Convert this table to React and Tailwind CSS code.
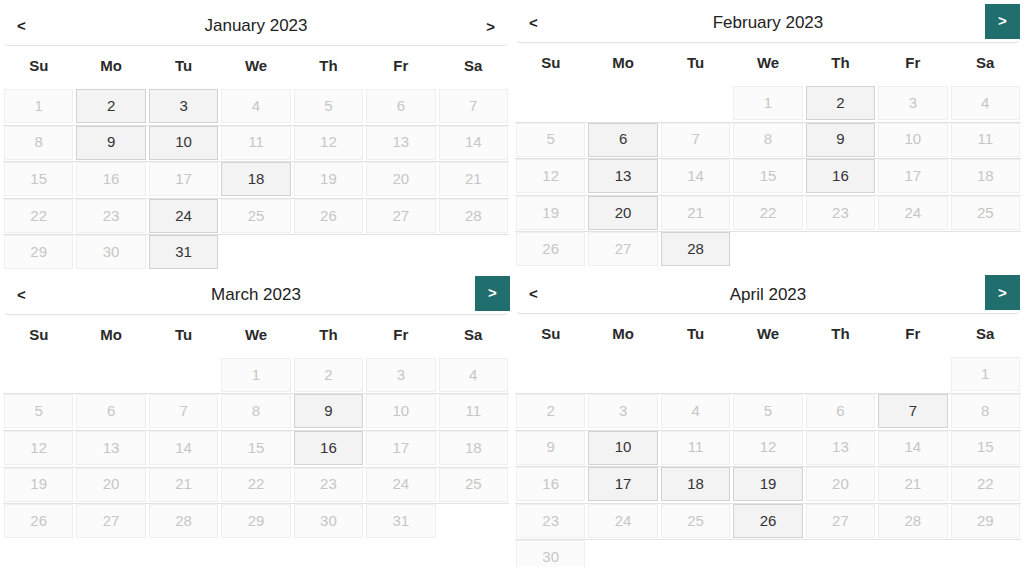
import React from "react";

const DAYS = ["Su", "Mo", "Tu", "We", "Th", "Fr", "Sa"];

function buildWeeks(start, count) {
  const cells = [];
  for (let i = 0; i < start; i++) cells.push(null);
  for (let d = 1; d <= count; d++) cells.push(d);
  const weeks = [];
  for (let i = 0; i < cells.length; i += 7) weeks.push(cells.slice(i, i + 7));
  return weeks;
}

function Calendar({ title, start, count, highlighted, className, teal, btnClass }) {
  const weeks = buildWeeks(start, count);
  return (
    <div className={className}>
      <div className="relative flex h-[38px] items-center justify-center rounded-md bg-white shadow-[0_2px_1px_-1px_rgba(0,0,0,0.13)]">
        <span className="absolute left-[14px] top-[11px] text-[15px] font-bold leading-none text-[#222]">&lt;</span>
        <span className="mb-[0px] text-[17px] font-medium text-[#222]">{title}</span>
        {teal ? (
          <span className={btnClass + " absolute top-0 flex h-[35px] w-[35px] items-center justify-center bg-[#206e6d] text-[15px] font-bold text-white"}>&gt;</span>
        ) : (
          <span className="absolute right-[14px] top-[12px] text-[15px] font-bold leading-none text-[#222]">&gt;</span>
        )}
      </div>
      <div className="grid h-[44px] grid-cols-7 items-center gap-[3px] px-px pb-[2px]">
        {DAYS.map((d) => (
          <div key={d} className="text-center text-[15px] font-semibold text-[#2a2a2a]">
            {d}
          </div>
        ))}
      </div>
      <div className="flex flex-col">
        {weeks.map((w, wi) => (
          <div
            key={wi}
            className={
              wi < weeks.length - 1
                ? "grid grid-cols-7 gap-[3px] border-b border-[#e2e2e2] px-px pb-[1.6px]"
                : "grid grid-cols-7 gap-[3px] px-px"
            }
          >
            {Array.from({ length: 7 }).map((_, ci) => {
              const d = w[ci];
              if (d == null) return <div key={ci} className="h-[34px]" />;
              const on = highlighted.includes(d);
              return (
                <div
                  key={ci}
                  className={
                    on
                      ? "flex h-[34px] items-center justify-center border border-[#d2d2d2] bg-[#f3f3f3] text-[15px] text-[#333]"
                      : "flex h-[34px] items-center justify-center border border-[#efefef] bg-[#fbfbfb] text-[15px] text-[#c6c6c6]"
                  }
                >
                  {d}
                </div>
              );
            })}
          </div>
        ))}
      </div>
    </div>
  );
}

export default function App() {
  return (
    <div
      className="flex h-[567px] w-[1024px] gap-[6px] overflow-hidden bg-white pl-[3px]"
      style={{ fontFamily: '"Liberation Sans", Arial, sans-serif' }}
    >
      <div className="flex w-[506px] flex-col pt-[7px]">
        <Calendar
          title="January 2023"
          start={0}
          count={31}
          highlighted={[2, 3, 9, 10, 18, 24, 31]}
        />
        <Calendar
          className="mt-[6.5px]"
          title="March 2023"
          start={3}
          count={31}
          highlighted={[9, 16]}
          teal
          btnClass="right-[-1px]"
        />
      </div>
      <div className="flex w-[506px] flex-col pt-[4px]">
        <Calendar
          title="February 2023"
          start={3}
          count={28}
          highlighted={[2, 6, 9, 13, 16, 20, 28]}
          teal
          btnClass="right-px"
        />
        <Calendar
          className="mt-[9px]"
          title="April 2023"
          start={6}
          count={30}
          highlighted={[7, 10, 17, 18, 19, 26]}
          teal
          btnClass="right-px"
        />
      </div>
    </div>
  );
}
